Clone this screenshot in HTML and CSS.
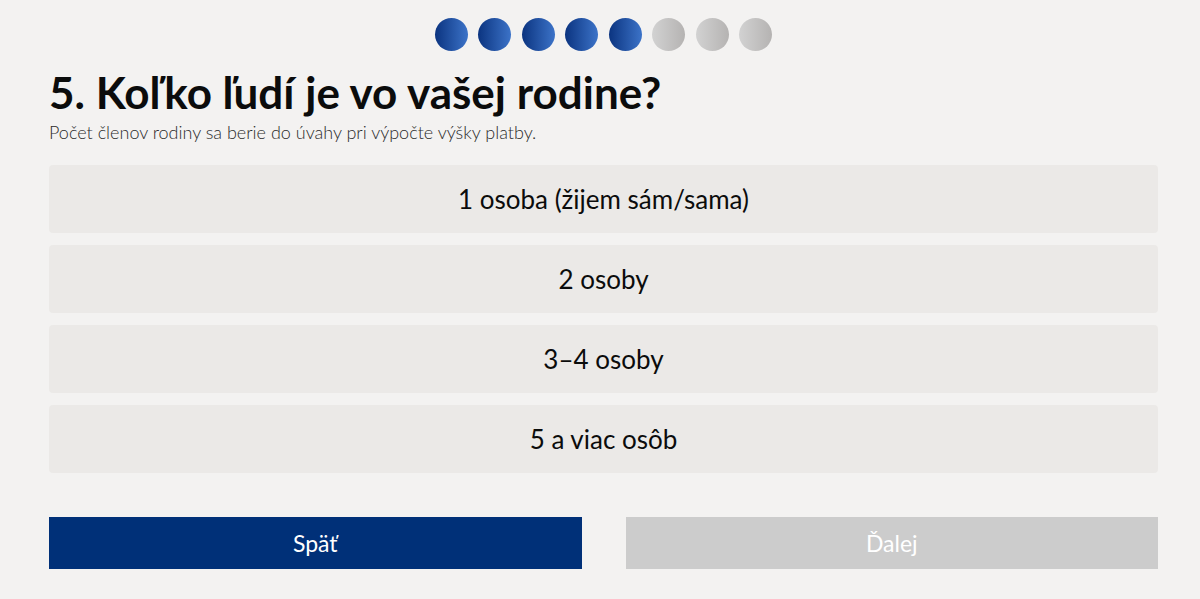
FILE: index.html
```html
<!DOCTYPE html>
<html lang="sk">
<head>
  <meta charset="UTF-8">
  <meta name="viewport" content="width=device-width, initial-scale=1.0">
  <title>Dotazník</title>
  <link rel="stylesheet" href="styles.css">
</head>
<body>
  <div class="container">
    <div class="progress">
      <span class="dot done"></span>
      <span class="dot done"></span>
      <span class="dot done"></span>
      <span class="dot done"></span>
      <span class="dot done"></span>
      <span class="dot"></span>
      <span class="dot"></span>
      <span class="dot"></span>
    </div>

    <h1 class="question">5. Koľko ľudí je vo vašej rodine?</h1>
    <p class="hint">Počet členov rodiny sa berie do úvahy pri výpočte výšky platby.</p>

    <div class="options">
      <button class="option">1 osoba (žijem sám/sama)</button>
      <button class="option">2 osoby</button>
      <button class="option">3–4 osoby</button>
      <button class="option">5 a viac osôb</button>
    </div>

    <div class="nav">
      <button class="nav-button back">Späť</button>
      <button class="nav-button next" disabled>Ďalej</button>
    </div>
  </div>
</body>
</html>
```

FILE: styles.css
```css
body {
  margin: 0;
  font-family: Lato, "Noto Sans", sans-serif;
  background-color: #f3f2f1;
  color: #0b0c0c;
}
.container {
  width: 1109px;
  margin-left: 49px;
  padding-top: 18px;
}
.progress {
  display: flex;
  justify-content: center;
  gap: 10.5px;
}
.dot {
  width: 33px;
  height: 33px;
  border-radius: 50%;
  background: linear-gradient(to right, #d2d2d2, #b5b3b2);
}
.dot.done {
  background: linear-gradient(to right, #0b3480, #3c73c8);
}
.question {
  margin: 16px 0 0;
  font-size: 44px;
  font-weight: bold;
  line-height: 50px;
}
.hint {
  margin: 4px 0 0;
  font-size: 18px;
  font-weight: 300;
  line-height: 22px;
  color: #2b2b2b;
}
.options {
  display: flex;
  flex-direction: column;
  gap: 12px;
  margin-top: 22px;
}
.option {
  height: 68px;
  border: none;
  border-radius: 4px;
  background-color: #ebe9e7;
  font-family: inherit;
  font-size: 26px;
  color: #0b0c0c;
  cursor: pointer;
}
.nav {
  display: flex;
  gap: 44px;
  margin-top: 44px;
}
.nav-button {
  flex: 1;
  height: 52px;
  border: none;
  font-family: inherit;
  font-size: 23px;
  color: #fff;
  cursor: pointer;
}
.nav-button.back {
  background-color: #003078;
}
.nav-button.next {
  background-color: #cccccc;
  cursor: default;
}
```
